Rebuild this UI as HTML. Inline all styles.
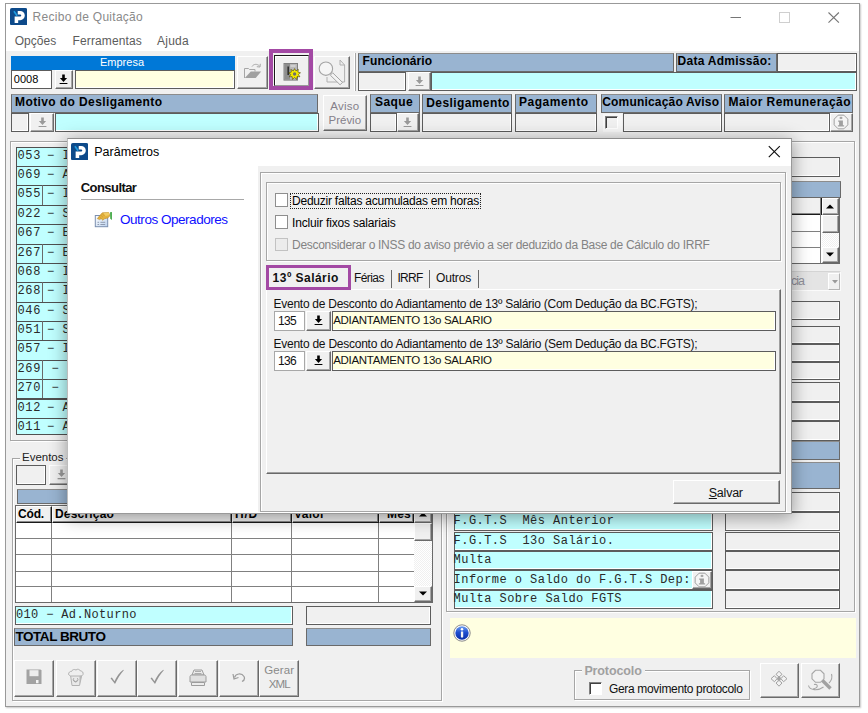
<!DOCTYPE html>
<html><head><meta charset="utf-8"><title>Recibo de Quitação</title>
<style>
html,body{margin:0;padding:0;background:#fff;}
body{width:868px;height:713px;position:relative;overflow:hidden;font-family:"Liberation Sans",sans-serif;}
div,span.t,svg{position:absolute;}
span.t{white-space:pre;}
.sk{border:1px solid #5c5c5c;box-sizing:border-box;box-shadow:inset -1px -1px 0 #fff;}
.rb{background:#f0f0f0;border:1px solid #fff;border-right-color:#6a6a6a;border-bottom-color:#6a6a6a;box-sizing:border-box;box-shadow:inset -1px -1px 0 #a6a6a6;}
.hd{border:1px solid #6a6a6a;border-top-color:#8c8c8c;box-sizing:border-box;}
.gf{border:1px solid #a6a6a6;box-sizing:border-box;box-shadow:inset 1px 1px 0 #fff,1px 1px 0 #fff;}
</style></head>
<body>
<div style="left:5px;top:3px;width:855px;height:704px;background:#fff;border:1px solid #999;box-sizing:border-box;box-shadow:1px 1px 1.5px rgba(0,0,0,.22);"></div>
<div style="left:6px;top:51px;width:853px;height:655px;background:#f0f0f0;"></div>
<svg style="left:9.7px;top:8.2px;" width="17.3" height="17.3" viewBox="0 0 17 17"><rect x="0" y="0" width="17" height="17" rx="1.8" fill="#0d4a8a"/><path d="M6.300 14.800V10.200H10a2.800 2.800 0 0 0 0-5.600H7.600" fill="none" stroke="#fff" stroke-width="3.500"/><path d="M3.900 3.100L7 7.500" stroke="#1e9be0" stroke-width="1.700" fill="none"/></svg>
<span class="t" style="left:32.6px;top:10.84px;font:normal 12px/12px 'Liberation Sans', sans-serif;color:#8a8a8a;letter-spacing:0.28px;">Recibo de Quitação</span>
<svg style="left:725px;top:8px;" width="120" height="20" viewBox="0 0 120 20"><path d="M5.5 9.5h10.5" stroke="#767676" stroke-width="1" fill="none"/><rect x="54.5" y="4.5" width="10" height="10" stroke="#cfcfcf" stroke-width="1" fill="none"/><path d="M103.5 4.5l10.4 10.2M113.9 4.5l-10.4 10.2" stroke="#767676" stroke-width="1.1" fill="none"/></svg>
<span class="t" style="left:14.7px;top:35.34px;font:normal 12px/12px 'Liberation Sans', sans-serif;color:#5c5c5c;letter-spacing:0.02px;">Opções</span>
<span class="t" style="left:72.5px;top:35.34px;font:normal 12px/12px 'Liberation Sans', sans-serif;color:#5c5c5c;letter-spacing:0.13px;">Ferramentas</span>
<span class="t" style="left:157px;top:35.34px;font:normal 12px/12px 'Liberation Sans', sans-serif;color:#5c5c5c;letter-spacing:0.26px;">Ajuda</span>
<div style="left:10.7px;top:56px;width:224.3px;height:14px;background:#0078d7;"></div>
<span class="t" style="left:100px;top:57.29px;font:normal 11px/11px 'Liberation Sans', sans-serif;color:#fff;letter-spacing:-0px;">Empresa</span>
<div class="sk" style="left:10.7px;top:70px;width:41.6px;height:18.5px;background:#fff;"></div>
<span class="t" style="left:13.8px;top:74.29px;font:normal 11px/11px 'Liberation Sans', sans-serif;color:#000;letter-spacing:0px;">0008</span>
<div class="rb" style="left:55px;top:70px;width:17.5px;height:18.5px;"></div>
<svg style="left:59.2px;top:73.9px;" width="9" height="10.6" viewBox="0 0 9 10.6"><path d="M3.2 0.5h2.6v3.6h2.3L4.5 7.9 0.9 4.1h2.3z" fill="#000"/><rect x="0.6" y="9" width="7.8" height="1.3" fill="#000"/></svg>
<div class="sk" style="left:75px;top:70px;width:160px;height:18.5px;background:#ffffe1;"></div>
<div class="rb" style="left:236.5px;top:56px;width:31.5px;height:33px;"></div>
<svg style="left:243px;top:62px;" width="20" height="18" viewBox="0 0 20 18"><g transform="translate(-243 -62)"><path d="M244.5 78V68.5h4l1 1h5.500v2" fill="none" stroke="#a6a6a6" stroke-width="1"/><path d="M244.800 78l6-6.500h10.400l-5.500 6.500z" fill="#a0a0a0"/><path d="M252 66.500c1.500-2.500 5-3 7.500-0.500M260.300 63.800l-0.300 3.200-3.200-0.300" fill="none" stroke="#a6a6a6" stroke-width="1"/></g></svg>
<div class="rb" style="left:274px;top:55px;width:34.5px;height:30.5px;border-color:#1a1a1a #9a9a9a #9a9a9a #1a1a1a;box-shadow:inset 1px 1px 0 #fff;"></div>
<svg style="left:282px;top:62px;" width="20" height="20" viewBox="0 0 20 20"><g transform="translate(-282 -62)"><rect x="284" y="63.500" width="13.500" height="16.600" fill="#b9b9b9" stroke="#808080" stroke-width="1"/><rect x="284.500" y="64" width="5.500" height="15.600" fill="#8e8e8e"/><rect x="287.500" y="66.500" width="1.300" height="8.500" fill="#1a1a1a"/><rect x="290.500" y="65.500" width="5" height="1" fill="#e8e8e8"/><g transform="translate(294.600 73.800)"><path d="M0-5.200l1.300 2.300 2.500-1.500-0.500 2.700 2.600 0.700-2.100 1.700 1.500 2.300-2.800-0.200-0.400 2.800-2.100-1.900-2.100 1.900-0.400-2.800-2.800 0.200 1.500-2.300-2.100-1.700 2.600-0.700-0.500-2.700 2.500 1.500z" fill="#f4ea00" stroke="#3a3600" stroke-width="0.55"/><circle cx="0" cy="0.200" r="1.700" fill="#6e6e6e"/></g></g></svg>
<div style="left:269px;top:49px;width:44px;height:41px;border:4.8px solid #a349a4;box-sizing:border-box;"></div>
<div class="rb" style="left:314px;top:56px;width:36px;height:33px;"></div>
<svg style="left:316px;top:57px;" width="32" height="30" viewBox="0 0 32 30"><g transform="translate(-316 -57)"><path d="M327 77v5h17.600V65l-4.600-5" fill="none" stroke="#b0b0b0" stroke-width="1"/><path d="M340 60v5h4.600" fill="none" stroke="#b0b0b0" stroke-width="1"/><path d="M330.300 75.200l2.400-2.400 9.800 9.600-2.400 2.400z" fill="#f3f3f3" stroke="#a4a4a4" stroke-width="1"/><circle cx="325.900" cy="68.700" r="6.700" fill="#f5f5f5" stroke="#a4a4a4" stroke-width="1.100"/></g></svg>
<div style="left:354px;top:52.5px;width:1px;height:38.5px;background:#fff;"></div>
<div style="left:355px;top:52.5px;width:1px;height:38.5px;background:#a6a6a6;"></div>
<div class="hd" style="left:358px;top:53px;width:316px;height:19px;background:#99b4d1;"></div>
<span class="t" style="left:362.6px;top:55.14px;font:bold 12px/12px 'Liberation Sans', sans-serif;color:#000;letter-spacing:0.08px;">Funcionário</span>
<div class="hd" style="left:676px;top:53px;width:101px;height:19px;background:#99b4d1;"></div>
<span class="t" style="left:677.5px;top:55.14px;font:bold 12px/12px 'Liberation Sans', sans-serif;color:#000;letter-spacing:0.27px;">Data Admissão:</span>
<div class="sk" style="left:777px;top:53px;width:79.5px;height:19px;background:#f0f0f0;"></div>
<div class="sk" style="left:358px;top:72px;width:48px;height:18.5px;background:#f0f0f0;"></div>
<div class="rb" style="left:408px;top:72px;width:22.5px;height:18.5px;"></div>
<svg style="left:414.5px;top:75.7px;" width="9" height="10.6" viewBox="0 0 9 10.6"><path d="M3.2 0.5h2.6v3.6h2.3L4.5 7.9 0.9 4.1h2.3z" fill="#9a9a9a"/><rect x="0.6" y="9" width="7.8" height="1.3" fill="#9a9a9a"/></svg>
<div class="sk" style="left:431px;top:72px;width:425.5px;height:19px;background:#c0ffff;"></div>
<div class="hd" style="left:10.7px;top:94px;width:307.8px;height:19px;background:#99b4d1;"></div>
<span class="t" style="left:15px;top:96.14px;font:bold 12px/12px 'Liberation Sans', sans-serif;color:#000;letter-spacing:0.4px;">Motivo do Desligamento</span>
<div class="sk" style="left:10.7px;top:113px;width:18.3px;height:18.5px;background:#f0f0f0;"></div>
<div class="rb" style="left:30px;top:113px;width:24px;height:18.5px;"></div>
<svg style="left:37.5px;top:116.9px;" width="9" height="10.6" viewBox="0 0 9 10.6"><path d="M3.2 0.5h2.6v3.6h2.3L4.5 7.9 0.9 4.1h2.3z" fill="#9a9a9a"/><rect x="0.6" y="9" width="7.8" height="1.3" fill="#9a9a9a"/></svg>
<div class="sk" style="left:54.5px;top:113px;width:264px;height:18.5px;background:#c0ffff;"></div>
<div class="rb" style="left:323px;top:95px;width:43.5px;height:35.5px;"></div>
<span class="t" style="left:330.3px;top:101.27px;font:normal 11.5px/11.5px 'Liberation Sans', sans-serif;color:#85808a;letter-spacing:0.22px;">Aviso</span>
<span class="t" style="left:328.55px;top:115.27px;font:normal 11.5px/11.5px 'Liberation Sans', sans-serif;color:#85808a;letter-spacing:-0.02px;">Prévio</span>
<div class="hd" style="left:370px;top:94px;width:49.5px;height:19px;background:#99b4d1;"></div>
<span class="t" style="left:375px;top:96.14px;font:bold 12px/12px 'Liberation Sans', sans-serif;color:#000;letter-spacing:0.4px;">Saque</span>
<div class="sk" style="left:370px;top:113px;width:26.5px;height:18.5px;background:#f0f0f0;"></div>
<div class="rb" style="left:397px;top:113px;width:21.5px;height:18.5px;"></div>
<svg style="left:403.2px;top:116.9px;" width="9" height="10.6" viewBox="0 0 9 10.6"><path d="M3.2 0.5h2.6v3.6h2.3L4.5 7.9 0.9 4.1h2.3z" fill="#9a9a9a"/><rect x="0.6" y="9" width="7.8" height="1.3" fill="#9a9a9a"/></svg>
<div style="left:418.5px;top:113px;width:1px;height:18.5px;background:#6a6a6a;"></div>
<div class="hd" style="left:422px;top:94px;width:90px;height:19px;background:#99b4d1;"></div>
<span class="t" style="left:426.3px;top:96.84px;font:bold 12px/12px 'Liberation Sans', sans-serif;color:#000;letter-spacing:0.4px;">Desligamento</span>
<div class="sk" style="left:422px;top:113px;width:90px;height:18.5px;background:#f0f0f0;"></div>
<div class="hd" style="left:515px;top:94px;width:81.5px;height:19px;background:#99b4d1;"></div>
<span class="t" style="left:518.9px;top:96.14px;font:bold 12px/12px 'Liberation Sans', sans-serif;color:#000;letter-spacing:0.56px;">Pagamento</span>
<div class="sk" style="left:515px;top:113px;width:81.5px;height:18.5px;background:#f0f0f0;"></div>
<div class="hd" style="left:601px;top:94px;width:120.5px;height:19px;background:#99b4d1;"></div>
<span class="t" style="left:602.2px;top:96.14px;font:bold 12px/12px 'Liberation Sans', sans-serif;color:#000;letter-spacing:0.19px;">Comunicação Aviso</span>
<div style="left:603px;top:114px;width:19px;height:17.5px;background:#f7f7f7;"></div>
<div style="left:604.5px;top:116.3px;width:13px;height:13px;background:#f0f0f0;border:1px solid #fff;border-top-color:#808080;border-left-color:#808080;box-sizing:border-box;box-shadow:inset 1px 1px 0 #404040;"></div>
<div class="sk" style="left:623px;top:113px;width:98.5px;height:18.5px;background:#f0f0f0;"></div>
<div class="hd" style="left:724px;top:94px;width:128.8px;height:19px;background:#99b4d1;"></div>
<span class="t" style="left:728.5px;top:96.14px;font:bold 12px/12px 'Liberation Sans', sans-serif;color:#000;letter-spacing:0.46px;">Maior Remuneração</span>
<div class="sk" style="left:724px;top:113px;width:105.5px;height:18.5px;background:#f0f0f0;"></div>
<div class="rb" style="left:830px;top:113px;width:22.8px;height:18.7px;"></div>
<svg style="left:832.4px;top:112.8px;" width="18" height="18" viewBox="0 0 18 18"><g transform="translate(9 9) scale(0.95)"><path d="M-3-7.200h6l4.200 4.200v6l-4.200 4.200h-6l-4.200-4.200v-6z" fill="#f5f5f5" stroke="#9c9c9c" stroke-width="1"/><path d="M0-5.800l2 1.500-2 1.500-2-1.500z" fill="#a0a0a0"/><path d="M-3-1.500h5v5h1.300v1.200h-6.600v-1.200h1.300v-3.800h-1z" fill="#a0a0a0"/></g></svg>
<div class="gf" style="left:10px;top:141px;width:433.5px;height:300px;"></div>
<div style="left:16.3px;top:146.7px;width:421.7px;height:20.37px;background:#c0ffff;border:1px solid #505050;border-left-width:1.3px;box-sizing:border-box;"></div>
<span class="t" style="left:17.52px;top:149.7px;font:normal 12px/12px 'Liberation Mono', monospace;color:#2a2a2a;letter-spacing:0.63px;">053</span>
<span class="t" style="left:46.91px;top:149.7px;font:normal 12px/12px 'Liberation Mono', monospace;color:#2a2a2a;letter-spacing:0.63px;">− I</span>
<div style="left:16.3px;top:166.07px;width:421.7px;height:20.37px;background:#c0ffff;border:1px solid #505050;border-left-width:1.3px;box-sizing:border-box;"></div>
<span class="t" style="left:17.52px;top:169.07px;font:normal 12px/12px 'Liberation Mono', monospace;color:#2a2a2a;letter-spacing:0.63px;">069</span>
<span class="t" style="left:46.91px;top:169.07px;font:normal 12px/12px 'Liberation Mono', monospace;color:#2a2a2a;letter-spacing:0.63px;">− A</span>
<div style="left:16.3px;top:185.44px;width:421.7px;height:20.37px;background:#c0ffff;border:1px solid #505050;border-left-width:1.3px;box-sizing:border-box;"></div>
<div style="left:42px;top:185.44px;width:1.2px;height:19.37px;background:#6a6a6a;"></div>
<span class="t" style="left:17.52px;top:188.44px;font:normal 12px/12px 'Liberation Mono', monospace;color:#2a2a2a;letter-spacing:0.63px;">055</span>
<span class="t" style="left:46.91px;top:188.44px;font:normal 12px/12px 'Liberation Mono', monospace;color:#2a2a2a;letter-spacing:0.63px;">− I</span>
<div style="left:16.3px;top:204.81px;width:421.7px;height:20.37px;background:#c0ffff;border:1px solid #505050;border-left-width:1.3px;box-sizing:border-box;"></div>
<span class="t" style="left:17.52px;top:207.81px;font:normal 12px/12px 'Liberation Mono', monospace;color:#2a2a2a;letter-spacing:0.63px;">022</span>
<span class="t" style="left:46.91px;top:207.81px;font:normal 12px/12px 'Liberation Mono', monospace;color:#2a2a2a;letter-spacing:0.63px;">− S</span>
<div style="left:16.3px;top:224.18px;width:421.7px;height:20.37px;background:#c0ffff;border:1px solid #505050;border-left-width:1.3px;box-sizing:border-box;"></div>
<span class="t" style="left:17.52px;top:227.18px;font:normal 12px/12px 'Liberation Mono', monospace;color:#2a2a2a;letter-spacing:0.63px;">067</span>
<span class="t" style="left:46.91px;top:227.18px;font:normal 12px/12px 'Liberation Mono', monospace;color:#2a2a2a;letter-spacing:0.63px;">− E</span>
<div style="left:16.3px;top:243.55px;width:421.7px;height:20.37px;background:#c0ffff;border:1px solid #505050;border-left-width:1.3px;box-sizing:border-box;"></div>
<div style="left:42px;top:243.55px;width:1.2px;height:19.37px;background:#6a6a6a;"></div>
<span class="t" style="left:17.52px;top:246.55px;font:normal 12px/12px 'Liberation Mono', monospace;color:#2a2a2a;letter-spacing:0.63px;">267</span>
<span class="t" style="left:46.91px;top:246.55px;font:normal 12px/12px 'Liberation Mono', monospace;color:#2a2a2a;letter-spacing:0.63px;">− E</span>
<div style="left:16.3px;top:262.92px;width:421.7px;height:20.37px;background:#c0ffff;border:1px solid #505050;border-left-width:1.3px;box-sizing:border-box;"></div>
<span class="t" style="left:17.52px;top:265.92px;font:normal 12px/12px 'Liberation Mono', monospace;color:#2a2a2a;letter-spacing:0.63px;">068</span>
<span class="t" style="left:46.91px;top:265.92px;font:normal 12px/12px 'Liberation Mono', monospace;color:#2a2a2a;letter-spacing:0.63px;">− I</span>
<div style="left:16.3px;top:282.29px;width:421.7px;height:20.37px;background:#c0ffff;border:1px solid #505050;border-left-width:1.3px;box-sizing:border-box;"></div>
<div style="left:42px;top:282.29px;width:1.2px;height:19.37px;background:#6a6a6a;"></div>
<span class="t" style="left:17.52px;top:285.29px;font:normal 12px/12px 'Liberation Mono', monospace;color:#2a2a2a;letter-spacing:0.63px;">268</span>
<span class="t" style="left:46.91px;top:285.29px;font:normal 12px/12px 'Liberation Mono', monospace;color:#2a2a2a;letter-spacing:0.63px;">− I</span>
<div style="left:16.3px;top:301.66px;width:421.7px;height:20.37px;background:#c0ffff;border:1px solid #505050;border-left-width:1.3px;box-sizing:border-box;"></div>
<span class="t" style="left:17.52px;top:304.66px;font:normal 12px/12px 'Liberation Mono', monospace;color:#2a2a2a;letter-spacing:0.63px;">046</span>
<span class="t" style="left:46.91px;top:304.66px;font:normal 12px/12px 'Liberation Mono', monospace;color:#2a2a2a;letter-spacing:0.63px;">− S</span>
<div style="left:16.3px;top:321.03px;width:421.7px;height:20.37px;background:#c0ffff;border:1px solid #505050;border-left-width:1.3px;box-sizing:border-box;"></div>
<div style="left:42px;top:321.03px;width:1.2px;height:19.37px;background:#6a6a6a;"></div>
<span class="t" style="left:17.52px;top:324.03px;font:normal 12px/12px 'Liberation Mono', monospace;color:#2a2a2a;letter-spacing:0.63px;">051</span>
<span class="t" style="left:46.91px;top:324.03px;font:normal 12px/12px 'Liberation Mono', monospace;color:#2a2a2a;letter-spacing:0.63px;">− S</span>
<div style="left:16.3px;top:340.4px;width:421.7px;height:20.37px;background:#c0ffff;border:1px solid #505050;border-left-width:1.3px;box-sizing:border-box;"></div>
<span class="t" style="left:17.52px;top:343.4px;font:normal 12px/12px 'Liberation Mono', monospace;color:#2a2a2a;letter-spacing:0.63px;">057</span>
<span class="t" style="left:46.91px;top:343.4px;font:normal 12px/12px 'Liberation Mono', monospace;color:#2a2a2a;letter-spacing:0.63px;">− I</span>
<div style="left:16.3px;top:359.77px;width:421.7px;height:20.37px;background:#c0ffff;border:1px solid #505050;border-left-width:1.3px;box-sizing:border-box;"></div>
<div style="left:42px;top:359.77px;width:1.2px;height:19.37px;background:#6a6a6a;"></div>
<span class="t" style="left:17.52px;top:362.77px;font:normal 12px/12px 'Liberation Mono', monospace;color:#2a2a2a;letter-spacing:0.63px;">269</span>
<span class="t" style="left:51.41px;top:362.77px;font:normal 12px/12px 'Liberation Mono', monospace;color:#2a2a2a;letter-spacing:0.63px;">− I</span>
<div style="left:16.3px;top:379.14px;width:421.7px;height:20.37px;background:#c0ffff;border:1px solid #505050;border-left-width:1.3px;box-sizing:border-box;"></div>
<div style="left:42px;top:379.14px;width:1.2px;height:19.37px;background:#6a6a6a;"></div>
<span class="t" style="left:17.52px;top:382.14px;font:normal 12px/12px 'Liberation Mono', monospace;color:#2a2a2a;letter-spacing:0.63px;">270</span>
<span class="t" style="left:51.41px;top:382.14px;font:normal 12px/12px 'Liberation Mono', monospace;color:#2a2a2a;letter-spacing:0.63px;">− I</span>
<div style="left:16.3px;top:398.51px;width:421.7px;height:20.37px;background:#c0ffff;border:1px solid #505050;border-left-width:1.3px;box-sizing:border-box;"></div>
<span class="t" style="left:17.52px;top:401.51px;font:normal 12px/12px 'Liberation Mono', monospace;color:#2a2a2a;letter-spacing:0.63px;">012</span>
<span class="t" style="left:46.91px;top:401.51px;font:normal 12px/12px 'Liberation Mono', monospace;color:#2a2a2a;letter-spacing:0.63px;">− A</span>
<div style="left:16.3px;top:417.88px;width:421.7px;height:17.3px;background:#c0ffff;border:1px solid #505050;border-left-width:1.3px;box-sizing:border-box;"></div>
<span class="t" style="left:17.52px;top:420.88px;font:normal 12px/12px 'Liberation Mono', monospace;color:#2a2a2a;letter-spacing:0.63px;">011</span>
<span class="t" style="left:46.91px;top:420.88px;font:normal 12px/12px 'Liberation Mono', monospace;color:#2a2a2a;letter-spacing:0.63px;">− A</span>
<div class="gf" style="left:12.2px;top:457.5px;width:430.3px;height:243.5px;"></div>
<div style="left:19.5px;top:450px;width:46.5px;height:14px;background:#f0f0f0;"></div>
<span class="t" style="left:22px;top:451.77px;font:normal 11.5px/11.5px 'Liberation Sans', sans-serif;color:#222;letter-spacing:-0.01px;">Eventos</span>
<div class="sk" style="left:15.5px;top:465px;width:30.5px;height:19.5px;background:#f0f0f0;"></div>
<div class="rb" style="left:49px;top:465px;width:23px;height:19.5px;"></div>
<svg style="left:56.5px;top:469.2px;" width="9" height="10.6" viewBox="0 0 9 10.6"><path d="M3.2 0.5h2.6v3.6h2.3L4.5 7.9 0.9 4.1h2.3z" fill="#9a9a9a"/><rect x="0.6" y="9" width="7.8" height="1.3" fill="#9a9a9a"/></svg>
<div class="hd" style="left:16.5px;top:489px;width:415.5px;height:14.8px;background:#99b4d1;"></div>
<div style="left:15px;top:505px;width:417.5px;height:98px;background:#fff;border:1px solid #6a6a6a;box-sizing:border-box;"></div>
<div style="left:16px;top:506px;width:36px;height:17px;background:#f0f0f0;border-right:1px solid #1a1a1a;border-bottom:1px solid #1a1a1a;border-top:1px solid #fff;border-left:1px solid #fff;box-sizing:border-box;box-shadow:inset -1px -1px 0 #8a8a8a;"></div>
<div style="left:52px;top:506px;width:180px;height:17px;background:#f0f0f0;border-right:1px solid #1a1a1a;border-bottom:1px solid #1a1a1a;border-top:1px solid #fff;border-left:1px solid #fff;box-sizing:border-box;box-shadow:inset -1px -1px 0 #8a8a8a;"></div>
<div style="left:232px;top:506px;width:59.5px;height:17px;background:#f0f0f0;border-right:1px solid #1a1a1a;border-bottom:1px solid #1a1a1a;border-top:1px solid #fff;border-left:1px solid #fff;box-sizing:border-box;box-shadow:inset -1px -1px 0 #8a8a8a;"></div>
<div style="left:291.5px;top:506px;width:87.5px;height:17px;background:#f0f0f0;border-right:1px solid #1a1a1a;border-bottom:1px solid #1a1a1a;border-top:1px solid #fff;border-left:1px solid #fff;box-sizing:border-box;box-shadow:inset -1px -1px 0 #8a8a8a;"></div>
<div style="left:379px;top:506px;width:35px;height:17px;background:#f0f0f0;border-right:1px solid #1a1a1a;border-bottom:1px solid #1a1a1a;border-top:1px solid #fff;border-left:1px solid #fff;box-sizing:border-box;box-shadow:inset -1px -1px 0 #8a8a8a;"></div>
<span class="t" style="left:18px;top:507.84px;font:bold 12px/12px 'Liberation Sans', sans-serif;color:#000;letter-spacing:-0.17px;">Cód.</span>
<span class="t" style="left:55px;top:507.84px;font:bold 12px/12px 'Liberation Sans', sans-serif;color:#000;letter-spacing:0.18px;">Descrição</span>
<span class="t" style="left:235px;top:507.84px;font:bold 12px/12px 'Liberation Sans', sans-serif;color:#000;letter-spacing:0.78px;">H/D</span>
<span class="t" style="left:294px;top:507.84px;font:bold 12px/12px 'Liberation Sans', sans-serif;color:#000;letter-spacing:0.33px;">Valor</span>
<span class="t" style="left:387px;top:507.84px;font:bold 12px/12px 'Liberation Sans', sans-serif;color:#000;letter-spacing:0.22px;">Mês</span>
<div style="left:16px;top:538px;width:398px;height:1px;background:#808080;"></div>
<div style="left:16px;top:554.25px;width:398px;height:1px;background:#808080;"></div>
<div style="left:16px;top:570.5px;width:398px;height:1px;background:#808080;"></div>
<div style="left:16px;top:586.25px;width:398px;height:1px;background:#808080;"></div>
<div style="left:51px;top:523px;width:1px;height:79px;background:#808080;"></div>
<div style="left:231px;top:523px;width:1px;height:79px;background:#808080;"></div>
<div style="left:290.5px;top:523px;width:1px;height:79px;background:#808080;"></div>
<div style="left:378px;top:523px;width:1px;height:79px;background:#808080;"></div>
<div style="left:414px;top:506px;width:17.5px;height:96.2px;background:repeating-conic-gradient(#ffffff 0% 25%, #f0f0f0 0% 50%) 0 0/2px 2px;"></div>
<div class="rb" style="left:414px;top:506px;width:17.5px;height:17.3px;"></div>
<div class="rb" style="left:414px;top:523.3px;width:17.5px;height:18px;"></div>
<div class="rb" style="left:414px;top:585.7px;width:17.5px;height:16.5px;"></div>
<svg style="left:418.75px;top:512.15px;" width="8" height="5" viewBox="0 0 8 5"><path d="M0 4.500L4 0.500 8 4.500z" fill="#000"/></svg>
<svg style="left:418.75px;top:591.45px;" width="8" height="5" viewBox="0 0 8 5"><path d="M0 0.500L4 4.500 8 0.500z" fill="#000"/></svg>
<div class="sk" style="left:15px;top:606px;width:277.5px;height:18.5px;background:#c0ffff;"></div>
<span class="t" style="left:15.98px;top:609.1px;font:normal 12px/12px 'Liberation Mono', monospace;color:#2a2a2a;letter-spacing:0.35px;">010 − Ad.Noturno</span>
<div class="sk" style="left:306px;top:606px;width:124.5px;height:18.5px;background:#f0f0f0;"></div>
<div class="hd" style="left:14px;top:627.5px;width:278.5px;height:18.8px;background:#99b4d1;"></div>
<span class="t" style="left:15.5px;top:629.57px;font:bold 13.5px/13.5px 'Liberation Sans', sans-serif;color:#000;letter-spacing:-0.46px;">TOTAL BRUTO</span>
<div class="hd" style="left:306px;top:627.5px;width:124.5px;height:18.8px;background:#99b4d1;"></div>
<div class="rb" style="left:14px;top:660.3px;width:39.7px;height:36.3px;"></div>
<div class="rb" style="left:55.5px;top:660.3px;width:40.7px;height:36.3px;"></div>
<div class="rb" style="left:97px;top:660.3px;width:39.7px;height:36.3px;"></div>
<div class="rb" style="left:137px;top:660.3px;width:39.7px;height:36.3px;"></div>
<div class="rb" style="left:178px;top:660.3px;width:39.7px;height:36.3px;"></div>
<div class="rb" style="left:219px;top:660.3px;width:39.7px;height:36.3px;"></div>
<div class="rb" style="left:259px;top:660.3px;width:40.2px;height:36.3px;"></div>
<svg style="left:25.7px;top:669.2px;" width="16" height="16" viewBox="0 0 16 16"><path d="M0.500 0.500h14l1 1v13.500H0.500z" fill="#a2a2a2"/><rect x="3.500" y="1.200" width="9" height="6" fill="#ececec"/><rect x="10" y="11" width="2.500" height="3.200" fill="#f4f4f4"/></svg>
<svg style="left:67px;top:668px;" width="18" height="19" viewBox="0 0 18 19"><g fill="#e9e9e9" stroke="#b2b2b2" stroke-width="1"><path d="M3.500 7l1.500 10.500h7.500l2.200-10z"/><path d="M1.500 6.500c0-2 1.500-3.500 3-3 .5-2 3-2.500 4.500-1.500 1.500-1.500 4-.5 4.500 1 2 0 3 1.500 2.500 3.500l-1.500 1.500h-11z" fill="#efefef"/><path d="M12.500 8v9l2.200-9.500z" fill="#b8b8b8" stroke="none"/><path d="M6.800 10.200a2.300 2.300 0 1 0 3.600 0M7.300 12.400l1.300 1.600 1.300-1.600" fill="none" stroke="#a6a6a6"/></g></svg>
<svg style="left:108.5px;top:668.5px;" width="16" height="16" viewBox="0 0 16 16"><path d="M1.500 9.300l1.400-0.800 2.600 3.800C7.500 7.500 10.500 3.500 14.300 0.700l0.500 0.600C11.500 5 8.500 9.800 6 15z" fill="#949494"/></svg>
<svg style="left:148.5px;top:668.5px;" width="16" height="16" viewBox="0 0 16 16"><path d="M1.500 9.300l1.400-0.800 2.600 3.800C7.500 7.500 10.500 3.500 14.300 0.700l0.500 0.600C11.500 5 8.500 9.800 6 15z" fill="#949494"/></svg>
<svg style="left:188px;top:668px;" width="20" height="19" viewBox="0 0 20 19"><path d="M6 2h8l2 5H4z" fill="#ececec" stroke="#9c9c9c"/><path d="M2 8.500c0-1 1-1.500 2-1.500h12c1 0 2 .5 2 1.500V14H2z" fill="#e0e0e0" stroke="#9c9c9c"/><path d="M3.500 14.500h13v3h-13z" fill="#ececec" stroke="#9c9c9c"/><path d="M7 3.500h6M6.500 5.500h7" stroke="#9c9c9c" stroke-width=".8"/></svg>
<svg style="left:232px;top:671px;" width="14" height="12" viewBox="0 0 14 12"><path d="M2.500 6.500c1-4 7-5 9.500-1 1 2 0 4-2 5" fill="none" stroke="#9c9c9c" stroke-width="1.200"/><path d="M1 3l1 5 4.500-1.500" fill="none" stroke="#9c9c9c" stroke-width="1.200"/></svg>
<span class="t" style="left:264.2px;top:665.27px;font:normal 11.5px/11.5px 'Liberation Sans', sans-serif;color:#8a8a8a;letter-spacing:0.12px;">Gerar</span>
<span class="t" style="left:268.7px;top:679.27px;font:normal 11.5px/11.5px 'Liberation Sans', sans-serif;color:#8a8a8a;letter-spacing:-0.89px;">XML</span>
<div class="gf" style="left:446px;top:141px;width:409px;height:470.5px;"></div>
<div class="sk" style="left:455px;top:157px;width:384.5px;height:19.5px;background:#f0f0f0;"></div>
<div class="hd" style="left:455px;top:180.5px;width:385.5px;height:17px;background:#99b4d1;"></div>
<div style="left:455px;top:197px;width:385px;height:66.5px;background:#fff;border:1px solid #6a6a6a;box-sizing:border-box;"></div>
<div style="left:456px;top:198px;width:365.5px;height:16.5px;background:#f0f0f0;border-bottom:1px solid #1a1a1a;border-right:1px solid #1a1a1a;box-sizing:border-box;box-shadow:inset -1px -1px 0 #8a8a8a;"></div>
<div style="left:456px;top:230.5px;width:365px;height:1px;background:#808080;"></div>
<div style="left:456px;top:247px;width:365px;height:1px;background:#808080;"></div>
<div style="left:820px;top:198px;width:1px;height:64.5px;background:#808080;"></div>
<div style="left:821.5px;top:198px;width:17.5px;height:64.5px;background:repeating-conic-gradient(#ffffff 0% 25%, #f0f0f0 0% 50%) 0 0/2px 2px;"></div>
<div class="rb" style="left:821.5px;top:198px;width:17.5px;height:17px;"></div>
<div class="rb" style="left:821.5px;top:215px;width:17.5px;height:17.5px;"></div>
<div class="rb" style="left:821.5px;top:246.5px;width:17.5px;height:16px;"></div>
<svg style="left:826.25px;top:204px;" width="8" height="5" viewBox="0 0 8 5"><path d="M0 4.500L4 0.500 8 4.500z" fill="#000"/></svg>
<svg style="left:826.25px;top:252px;" width="8" height="5" viewBox="0 0 8 5"><path d="M0 0.500L4 4.500 8 0.500z" fill="#000"/></svg>
<div style="left:455px;top:270.5px;width:385.5px;height:20.5px;background:#e4e4e4;border:1px solid #fbfbfb;border-top-color:#d4d4d4;border-left-color:#d4d4d4;box-sizing:border-box;"></div>
<span class="t" style="left:791px;top:275.42px;font:normal 12.5px/12.5px 'Liberation Sans', sans-serif;color:#8e8e98;letter-spacing:-0.99px;">cia</span>
<div style="left:828.4px;top:272.5px;width:11.2px;height:17.5px;background:#f0f0f0;border:1px solid #fff;border-right-color:#b4b4b4;border-bottom-color:#b4b4b4;box-sizing:border-box;"></div>
<svg style="left:831.5px;top:279.5px;" width="6" height="4" viewBox="0 0 6 4"><path d="M0 0h6L3 3.500z" fill="#9a9a9a"/></svg>
<div class="sk" style="left:455px;top:300.6px;width:385px;height:19.4px;background:#f0f0f0;"></div>
<div class="sk" style="left:455px;top:325.5px;width:385px;height:18.5px;background:#f0f0f0;"></div>
<div class="sk" style="left:455px;top:344px;width:385px;height:18px;background:#f0f0f0;"></div>
<div class="sk" style="left:455px;top:362px;width:385px;height:18px;background:#f0f0f0;"></div>
<div class="sk" style="left:455px;top:382px;width:385px;height:20.2px;background:#f0f0f0;"></div>
<div class="sk" style="left:455px;top:402.2px;width:385px;height:19.1px;background:#f0f0f0;"></div>
<div class="sk" style="left:455px;top:421.3px;width:385px;height:19.7px;background:#f0f0f0;"></div>
<div class="hd" style="left:455px;top:440.5px;width:385px;height:19.5px;background:#99b4d1;"></div>
<div class="hd" style="left:455px;top:461.7px;width:385px;height:27.5px;background:#99b4d1;"></div>
<div class="sk" style="left:725px;top:492.3px;width:115px;height:19.9px;background:#f0f0f0;"></div>
<div class="sk" style="left:725px;top:512.2px;width:115px;height:19.3px;background:#f0f0f0;"></div>
<div class="sk" style="left:725px;top:531.5px;width:115px;height:19.4px;background:#f0f0f0;"></div>
<div class="sk" style="left:725px;top:550.9px;width:115px;height:19.4px;background:#f0f0f0;"></div>
<div class="sk" style="left:725px;top:570.3px;width:115px;height:19.3px;background:#f0f0f0;"></div>
<div class="sk" style="left:725px;top:589.6px;width:115px;height:19.4px;background:#f0f0f0;"></div>
<div class="sk" style="left:453.5px;top:492.3px;width:259px;height:19.9px;background:#c0ffff;"></div>
<div class="sk" style="left:453.5px;top:512.2px;width:259px;height:19.3px;background:#c0ffff;"></div>
<span class="t" style="left:453.62px;top:515.4px;font:normal 12px/12px 'Liberation Mono', monospace;color:#2a2a2a;letter-spacing:0.45px;">F.G.T.S  Mês Anterior</span>
<div class="sk" style="left:453.5px;top:531.5px;width:259px;height:19.4px;background:#c0ffff;"></div>
<span class="t" style="left:453.62px;top:534.7px;font:normal 12px/12px 'Liberation Mono', monospace;color:#2a2a2a;letter-spacing:0.45px;">F.G.T.S  13o Salário.</span>
<div class="sk" style="left:453.5px;top:550.9px;width:259px;height:19.4px;background:#c0ffff;"></div>
<span class="t" style="left:453.62px;top:554.1px;font:normal 12px/12px 'Liberation Mono', monospace;color:#2a2a2a;letter-spacing:0.45px;">Multa</span>
<div class="sk" style="left:453.5px;top:570.3px;width:259px;height:19.3px;background:#c0ffff;"></div>
<span class="t" style="left:453.62px;top:573.5px;font:normal 12px/12px 'Liberation Mono', monospace;color:#2a2a2a;letter-spacing:0.45px;">Informe o Saldo do F.G.T.S Dep:</span>
<div class="sk" style="left:453.5px;top:589.6px;width:259px;height:19.4px;background:#c0ffff;"></div>
<span class="t" style="left:453.62px;top:592.8px;font:normal 12px/12px 'Liberation Mono', monospace;color:#2a2a2a;letter-spacing:0.45px;">Multa Sobre Saldo FGTS</span>
<div class="rb" style="left:692px;top:571px;width:20px;height:17.5px;"></div>
<svg style="left:693px;top:570.6px;" width="18" height="18" viewBox="0 0 18 18"><g transform="translate(9 9) scale(0.95)"><path d="M-3-7.200h6l4.200 4.200v6l-4.200 4.200h-6l-4.200-4.200v-6z" fill="#f5f5f5" stroke="#9c9c9c" stroke-width="1"/><path d="M0-5.800l2 1.500-2 1.500-2-1.500z" fill="#a0a0a0"/><path d="M-3-1.500h5v5h1.300v1.200h-6.600v-1.200h1.300v-3.800h-1z" fill="#a0a0a0"/></g></svg>
<div style="left:449.7px;top:618.4px;width:406.1px;height:39.6px;background:#ffffe1;"></div>
<svg style="left:452.7px;top:624.4px;" width="18" height="18" viewBox="0 0 18 18"><defs><linearGradient id="ig" x1="0" y1="0" x2="0" y2="1"><stop offset="0" stop-color="#6f9ff0"/><stop offset="0.45" stop-color="#1f4fd0"/><stop offset="1" stop-color="#0a2fa8"/></linearGradient></defs><circle cx="9" cy="9" r="8.200" fill="#fff" stroke="#8a8a8a" stroke-width="1"/><circle cx="9" cy="9" r="6.700" fill="url(#ig)"/><circle cx="9" cy="5.200" r="1.250" fill="#fff"/><rect x="7.900" y="7.400" width="2.300" height="6" rx="0.400" fill="#f4f4f4"/></svg>
<div class="gf" style="left:574.4px;top:670.2px;width:176.1px;height:29.6px;"></div>
<div style="left:581.5px;top:664px;width:63.5px;height:15px;background:#f0f0f0;"></div>
<span class="t" style="left:584.4px;top:665.22px;font:bold 12.5px/12.5px 'Liberation Sans', sans-serif;color:#a0a0a0;letter-spacing:-0.12px;">Protocolo</span>
<div style="left:588.8px;top:682.4px;width:13.2px;height:13px;background:#fff;border:1px solid #fff;border-top-color:#808080;border-left-color:#808080;box-sizing:border-box;box-shadow:inset 1px 1px 0 #404040;"></div>
<span class="t" style="left:609px;top:683.04px;font:normal 12px/12px 'Liberation Sans', sans-serif;color:#111;letter-spacing:-0.33px;">Gera movimento protocolo</span>
<div class="rb" style="left:760px;top:663px;width:39px;height:34.8px;"></div>
<svg style="left:770px;top:670px;" width="18" height="18" viewBox="0 0 18 18"><g transform="translate(9 8.700)" fill="#f2f2f2" stroke="#a2a2a2" stroke-width="1"><path d="M0-7.500l3 3.200-3 2.600-3-2.600z"/><path d="M0 7.500l3-3.200-3-2.600-3 2.600z"/><path d="M-8 0l3.400-3 2.700 3-2.700 3z"/><path d="M8 0l-3.400-3-2.700 3 2.700 3z"/><circle cx="0" cy="0" r="2" fill="#a2a2a2" stroke="none"/></g></svg>
<div class="rb" style="left:801.3px;top:663px;width:38.7px;height:34.8px;"></div>
<svg style="left:806px;top:668px;" width="28" height="26" viewBox="0 0 28 26"><g transform="translate(-806 -668)" fill="none" stroke="#a6a6a6" stroke-width="1.100"><path d="M815.500 670.300h5l3.500 3.500v5l-3.500 3.500h-5l-3.500-3.500v-5z" fill="#f3f3f3"/><path d="M822.500 680.500l8 8" stroke-width="3.400" stroke="#a2a2a2"/><path d="M808.500 685.500c1 5 9.500 5.500 15 1.500M831.500 674c1 3.500-.5 7-2.500 9"/><path d="M814 684.500c3.500-1 5.500 3-1 4.500"/></g></svg>
<div style="left:67px;top:137.6px;width:724.6px;height:376px;background:#fff;border:1px solid #999;border-top-color:#8c8c8c;border-left-color:#bdbdbd;box-sizing:border-box;box-shadow:0 3px 16px 1px rgba(0,0,0,.36);"></div>
<svg style="left:70.9px;top:142.9px;" width="17.3" height="17.3" viewBox="0 0 17 17"><rect x="0" y="0" width="17" height="17" rx="1.8" fill="#0d4a8a"/><path d="M6.300 14.800V10.200H10a2.800 2.800 0 0 0 0-5.600H7.600" fill="none" stroke="#fff" stroke-width="3.500"/><path d="M3.900 3.100L7 7.500" stroke="#1e9be0" stroke-width="1.700" fill="none"/></svg>
<span class="t" style="left:94.2px;top:146.42px;font:normal 12.5px/12.5px 'Liberation Sans', sans-serif;color:#000;letter-spacing:0.04px;">Parâmetros</span>
<svg style="left:766px;top:143px;" width="18" height="18" viewBox="0 0 18 18"><path d="M2.800 3.200l11 11M13.800 3.200l-11 11" stroke="#111" stroke-width="1.150" fill="none"/></svg>
<span class="t" style="left:80.8px;top:180.8px;font:bold 13px/13px 'Liberation Sans', sans-serif;color:#111;letter-spacing:-0.57px;">Consultar</span>
<div style="left:81px;top:199px;width:163px;height:1px;background:#a8a8a8;"></div>
<svg style="left:93px;top:211px;" width="20" height="17" viewBox="0 0 20 17"><g transform="translate(-93 -211)"><defs><linearGradient id="og" x1="0" y1="0" x2="1" y2="1"><stop offset="0" stop-color="#ffffff"/><stop offset="1" stop-color="#bcd2ee"/></linearGradient></defs><rect x="95.300" y="215.500" width="12.400" height="11.200" fill="url(#og)" stroke="#7b8fb0" stroke-width="1"/><path d="M97.500 222.300h1.600M100.400 222.300h4.800M97.500 224.500h1.600M100.400 224.500h4.800" stroke="#8f9bb0" stroke-width="1"/><path d="M97.300 218.600l5-5.800 6.400-0.300 1.300 3.300-2.300 2.200-3.200 0.700-1.600 1.600-1.700-1.600-1.600 0.900z" fill="#e4b23d" stroke="#b98a2b" stroke-width="0.600"/><path d="M99.300 216.600l2 2M100.700 215l2.300 2.300M102.100 213.600l2.400 2.400" stroke="#c79a30" stroke-width="0.700"/><path d="M103.500 212.900l5-0.300 1.200 2.500-4.200 1z" fill="#f1cc62"/><path d="M110 212.200l2-0.300v8l-1.800-1.100z" fill="#4fae52"/></g></svg>
<span class="t" style="left:120px;top:212.87px;font:normal 13.5px/13.5px 'Liberation Sans', sans-serif;color:#1010ff;letter-spacing:-0.47px;">Outros Operadores</span>
<div style="left:257.5px;top:166px;width:533px;height:346px;background:#f0f0f0;"></div>
<div class="gf" style="left:259.5px;top:172px;width:526.5px;height:339.5px;"></div>
<div class="gf" style="left:265.5px;top:182px;width:515.5px;height:78.5px;"></div>
<div style="left:275px;top:193.2px;width:13.4px;height:13.4px;background:#fff;border:1px solid #8e8e8e;box-sizing:border-box;"></div>
<div style="left:275px;top:215.4px;width:13.4px;height:13.4px;background:#fff;border:1px solid #8e8e8e;box-sizing:border-box;"></div>
<div style="left:275px;top:237.8px;width:13.4px;height:13.4px;background:#ececec;border:1px solid #c2c2c2;box-sizing:border-box;"></div>
<span class="t" style="left:292px;top:194.84px;font:normal 12px/12px 'Liberation Sans', sans-serif;color:#000;letter-spacing:-0.23px;">Deduzir faltas acumuladas em horas</span>
<div style="left:290px;top:193px;width:190.5px;height:16px;border:1px dotted #222;box-sizing:border-box;"></div>
<span class="t" style="left:292px;top:216.84px;font:normal 12px/12px 'Liberation Sans', sans-serif;color:#000;letter-spacing:-0.17px;">Incluir fixos salariais</span>
<span class="t" style="left:292px;top:239.14px;font:normal 12px/12px 'Liberation Sans', sans-serif;color:#838383;letter-spacing:-0.29px;">Desconsiderar o INSS do aviso prévio a ser deduzido da Base de Cálculo do IRRF</span>
<span class="t" style="left:272.6px;top:271.84px;font:bold 12px/12px 'Liberation Sans', sans-serif;color:#111;letter-spacing:0.47px;">13º Salário</span>
<span class="t" style="left:353.9px;top:271.84px;font:normal 12px/12px 'Liberation Sans', sans-serif;color:#111;letter-spacing:-0.56px;">Férias</span>
<span class="t" style="left:397.5px;top:271.84px;font:normal 12px/12px 'Liberation Sans', sans-serif;color:#111;letter-spacing:-0.75px;">IRRF</span>
<span class="t" style="left:436px;top:271.84px;font:normal 12px/12px 'Liberation Sans', sans-serif;color:#111;letter-spacing:-0.17px;">Outros</span>
<div style="left:390.5px;top:270px;width:1.2px;height:17.5px;background:#6a6a6a;"></div>
<div style="left:429px;top:270px;width:1.2px;height:17.5px;background:#6a6a6a;"></div>
<div style="left:478px;top:270px;width:1.2px;height:17.5px;background:#6a6a6a;"></div>
<div style="left:265.5px;top:288.5px;width:515.5px;height:185px;background:#f0f0f0;border:1px solid #fff;border-right-color:#696969;border-bottom-color:#696969;box-sizing:border-box;box-shadow:inset -1px -1px 0 #a0a0a0;"></div>
<div style="left:266.5px;top:266px;width:84px;height:25px;background:#f0f0f0;"></div>
<span class="t" style="left:272.6px;top:271.84px;font:bold 12px/12px 'Liberation Sans', sans-serif;color:#111;letter-spacing:0.47px;">13º Salário</span>
<div style="left:265.5px;top:265px;width:85px;height:24.7px;border:3px solid #a349a4;box-sizing:border-box;"></div>
<span class="t" style="left:273.5px;top:297.84px;font:normal 12px/12px 'Liberation Sans', sans-serif;color:#111;letter-spacing:-0.26px;">Evento de Desconto do Adiantamento de 13º Salário (Com Dedução da BC.FGTS);</span>
<div style="left:274px;top:311px;width:31px;height:19.5px;background:#fff;border:1px solid #a8a8a8;box-sizing:border-box;"></div>
<span class="t" style="left:278px;top:315.04px;font:normal 12px/12px 'Liberation Sans', sans-serif;color:#111;letter-spacing:-0.68px;">135</span>
<div class="rb" style="left:306px;top:311px;width:24.5px;height:19.5px;"></div>
<svg style="left:314.1px;top:314.5px;" width="9" height="10.6" viewBox="0 0 9 10.6"><path d="M3.2 0.5h2.6v3.6h2.3L4.5 7.9 0.9 4.1h2.3z" fill="#000"/><rect x="0.6" y="9" width="7.8" height="1.3" fill="#000"/></svg>
<div class="sk" style="left:331.5px;top:311px;width:444.5px;height:19.5px;background:#ffffe1;"></div>
<span class="t" style="left:333.2px;top:314.77px;font:normal 11.5px/11.5px 'Liberation Sans', sans-serif;color:#111;letter-spacing:-0.3px;">ADIANTAMENTO 13o SALARIO</span>
<span class="t" style="left:273.5px;top:338.14px;font:normal 12px/12px 'Liberation Sans', sans-serif;color:#111;letter-spacing:-0.25px;">Evento de Desconto do Adiantamento de 13º Salário (Sem Dedução da BC.FGTS);</span>
<div style="left:274px;top:351px;width:31px;height:19.5px;background:#fff;border:1px solid #a8a8a8;box-sizing:border-box;"></div>
<span class="t" style="left:278px;top:355.04px;font:normal 12px/12px 'Liberation Sans', sans-serif;color:#111;letter-spacing:-0.68px;">136</span>
<div class="rb" style="left:306px;top:351px;width:24.5px;height:19.5px;"></div>
<svg style="left:314.1px;top:354.5px;" width="9" height="10.6" viewBox="0 0 9 10.6"><path d="M3.2 0.5h2.6v3.6h2.3L4.5 7.9 0.9 4.1h2.3z" fill="#000"/><rect x="0.6" y="9" width="7.8" height="1.3" fill="#000"/></svg>
<div class="sk" style="left:331.5px;top:351px;width:444.5px;height:19.5px;background:#ffffe1;"></div>
<span class="t" style="left:333.2px;top:354.77px;font:normal 11.5px/11.5px 'Liberation Sans', sans-serif;color:#111;letter-spacing:-0.3px;">ADIANTAMENTO 13o SALARIO</span>
<div class="rb" style="left:673px;top:479.5px;width:107px;height:24px;"></div>
<span class="t" style="left:708.75px;top:486.72px;font:normal 12.5px/12.5px 'Liberation Sans', sans-serif;color:#111;letter-spacing:-0.23px;"><u>S</u>alvar</span>
</body></html>
